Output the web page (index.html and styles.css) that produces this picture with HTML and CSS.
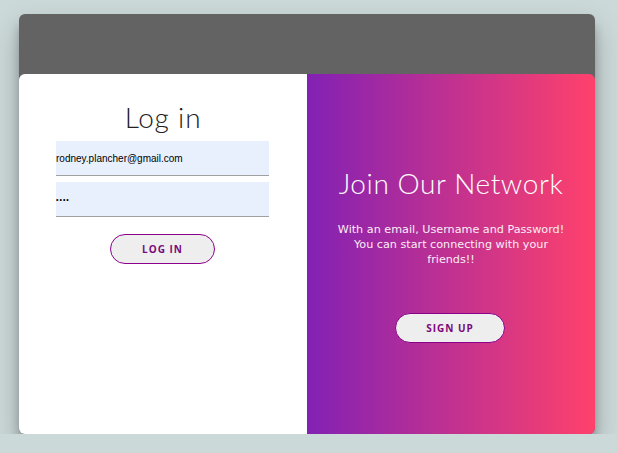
FILE: index.html
```html
<!DOCTYPE html>
<html>
<head>
<meta charset="utf-8">
<link rel="stylesheet" href="styles.css">
</head>
<body>
<div class="card">
  <div class="topbar"></div>
  <div class="panels">
    <section class="login">
      <h1 class="title">Log in</h1>
      <form class="form">
        <input class="field" type="email" value="rodney.plancher@gmail.com">
        <input class="field field-pass" type="password" value="1234">
        <button class="btn" type="button">Log in</button>
      </form>
    </section>
    <section class="join">
      <h1 class="title title-light">Join Our Network</h1>
      <p class="desc">With an email, Username and Password!<br>You can start connecting with your friends!!</p>
      <button class="btn" type="button">Sign up</button>
    </section>
  </div>
</div>
</body>
</html>
```

FILE: styles.css
```css
* { box-sizing: border-box; }
html, body { margin: 0; }
body {
  background: #ccd9d9;
  padding: 14px 0 0 19px;
  font-family: Lato, "Open Sans", sans-serif;
}
.card {
  width: 576px;
  height: 420px;
  background: #636363;
  border-radius: 6px;
  box-shadow: 0 14px 28px rgba(0,0,0,0.25), 0 10px 10px rgba(0,0,0,0.22);
  display: flex;
  flex-direction: column;
}
.topbar { height: 60px; flex: none; }
.panels {
  flex: 1;
  display: flex;
  border-radius: 6px;
  overflow: hidden;
}
.login, .join {
  flex: 1;
  display: flex;
  flex-direction: column;
  align-items: center;
}
.login { background: #fff; padding-top: 26px; }
.join {
  background: linear-gradient(to right, #8221b4, #ff416c);
  color: #fff;
  padding-top: 92px;
}
.title {
  margin: 0;
  font-weight: 300;
  font-size: 28px;
  line-height: 34px;
  color: #222;
  letter-spacing: 0.8px;
}
.title-light { color: #fff; letter-spacing: 0.6px; }
.form {
  width: 213px;
  margin: 7px 1px 0 0;
  display: flex;
  flex-direction: column;
  align-items: center;
  gap: 6px;
}
.field {
  width: 100%;
  height: 35px;
  border: none;
  border-bottom: 1px solid #a0a0a0;
  background: #e8f0fe;
  padding: 0;
  font-family: "Liberation Sans", Arial, sans-serif;
  font-size: 10px;
  color: #000;
  outline: none;
}
.field-pass { font-size: 7px; letter-spacing: 1px; }
.btn {
  height: 30px;
  width: 105px;
  border: 1px solid #8b008b;
  border-radius: 15px;
  background: #eeeeee;
  color: #7a0a7a;
  font-family: "Open Sans", sans-serif;
  font-weight: 700;
  font-size: 10px;
  letter-spacing: 1px;
  text-transform: uppercase;
  padding: 0;
}
.form .btn { margin-top: 11px; }
.desc {
  margin: 22px 0 0;
  font-family: "DejaVu Sans", sans-serif;
  font-size: 11.2px;
  line-height: 15px;
  text-align: center;
  width: 236px;
  color: #fbeef6;
}
.join .btn { width: 110px; margin-top: 46px; margin-right: 2px; }
```
